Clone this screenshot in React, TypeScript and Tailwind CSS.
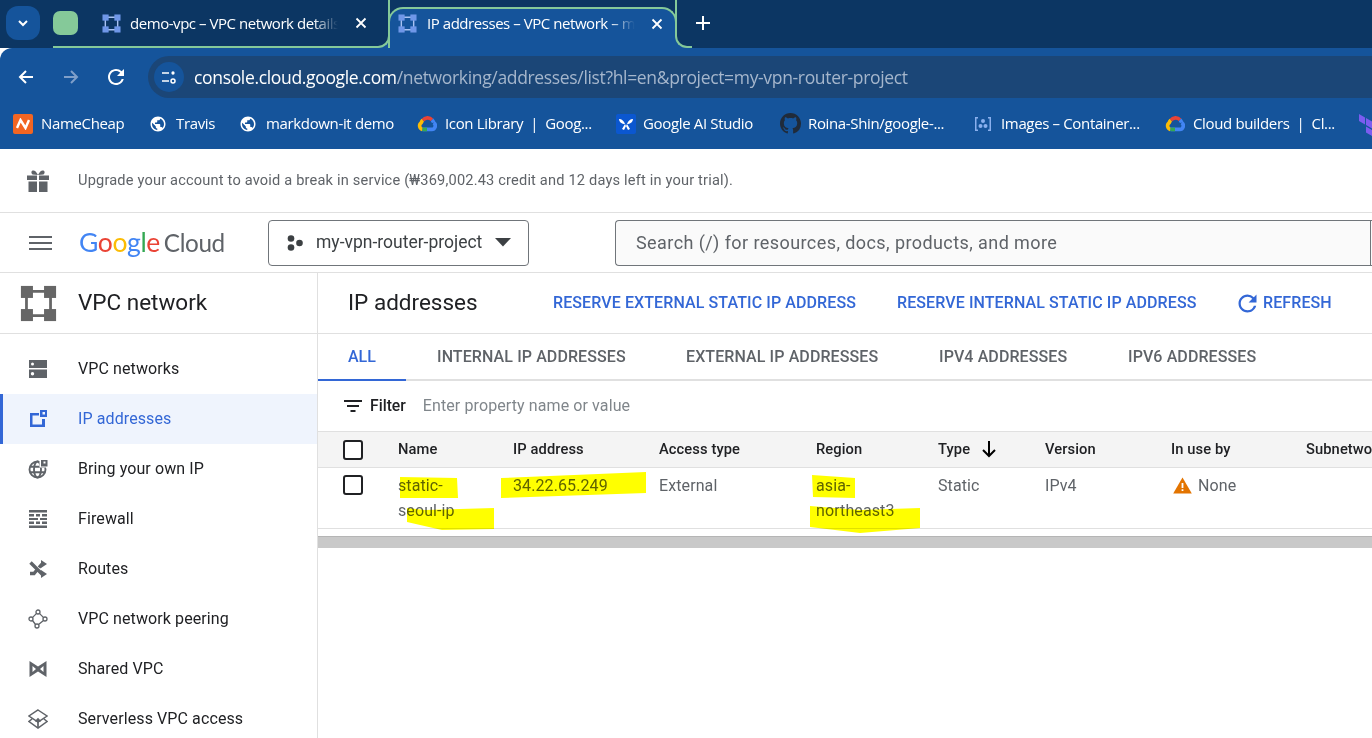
import type { ReactNode } from 'react'

function VpcIcon({ size = 20, fill = '#6f97e8', line = '#a9c2f2' }: { size?: number; fill?: string; line?: string }) {
  return (
    <svg width={size} height={size} viewBox="0 0 20 20" className="shrink-0">
      <path d="M3.500 6V14M6 3.500H14M16.500 6V14M6 16.500H14" stroke={line} strokeWidth="1.500" />
      <rect x="0.500" y="0.500" width="6.500" height="6.500" fill={fill} />
      <rect x="13" y="0.500" width="6.500" height="6.500" fill={fill} />
      <rect x="0.500" y="13" width="6.500" height="6.500" fill={fill} />
      <rect x="13" y="13" width="6.500" height="6.500" fill={fill} />
    </svg>
  )
}

function GlobeFav() {
  return (
    <svg width="18" height="18" viewBox="0 0 24 24" fill="#fff">
      <path d="M12 2C6.48 2 2 6.48 2 12s4.48 10 10 10 10-4.48 10-10S17.52 2 12 2zm-1 17.93c-3.95-.49-7-3.85-7-7.93 0-.62.08-1.21.21-1.79L9 15v1c0 1.1.9 2 2 2v1.93zm6.9-2.54c-.26-.81-1-1.39-1.9-1.39h-1v-3c0-.55-.45-1-1-1H8v-2h2c.55 0 1-.45 1-1V7h2c1.1 0 2-.9 2-2v-.41c2.93 1.19 5 4.06 5 7.41 0 2.08-.8 3.97-2.1 5.39z" />
    </svg>
  )
}

function CloudFav() {
  return (
    <svg width="20" height="18" viewBox="0 0 24 20" fill="none" strokeWidth="4.400">
      <path d="M7 5.500A7 7 0 0 1 18 5" stroke="#ea4335" />
      <path d="M18 5a7 7 0 0 1 2 3.400" stroke="#4285f4" />
      <path d="M6.500 16.500H17a4.400 4.400 0 0 0 3-8" stroke="#4285f4" />
      <path d="M7 5.500A7 7 0 0 0 5 8.500a4.500 4.500 0 0 0 1.500 8" stroke="#fbbc05" />
      <path d="M6.500 16.500H12" stroke="#34a853" />
    </svg>
  )
}

function CloseIcon() {
  return (
    <svg width="12" height="12" viewBox="0 0 12 12" stroke="#fff" strokeWidth="1.800" className="shrink-0">
      <path d="M1.500 1.500l9 9M10.500 1.500l-9 9" />
    </svg>
  )
}

function ReloadIcon({ size, fill, cls }: { size: number; fill: string; cls: string }) {
  return (
    <svg width={size} height={size} viewBox="0 0 24 24" fill={fill} className={cls}>
      <path d="M17.650 6.350A7.958 7.958 0 0 0 12 4c-4.420 0-7.990 3.580-7.990 8s3.570 8 7.990 8c3.730 0 6.840-2.550 7.730-6h-2.080A5.990 5.990 0 0 1 12 18c-3.310 0-6-2.690-6-6s2.690-6 6-6c1.660 0 3.140.69 4.220 1.780L13 11h7V4l-2.350 2.350z" />
    </svg>
  )
}

function Bookmark({ icon, label, w, gap = 'gap-[8px]' }: { icon: ReactNode; label: string; w: string; gap?: string }) {
  return (
    <div className={`flex items-center shrink-0 ${gap} ${w}`}>
      <span className="flex w-[20px] justify-center shrink-0">{icon}</span>
      <span className="text-[15px] text-white whitespace-pre">{label}</span>
    </div>
  )
}

function BrowserChrome() {
  return (
    <div className="font-['Open_Sans',sans-serif] tracking-[-0.35px]">
      {/* tab strip */}
      <div className="flex h-[48px] bg-[#0c3663] items-stretch">
        <div className="flex items-center justify-center w-[34px] h-[34px] ml-[6px] mt-[6px] rounded-[12px] bg-[#15549b]">
          <svg width="14" height="14" viewBox="0 0 14 14" fill="none" stroke="#fff" strokeWidth="2"><path d="M3 5l4 4 4-4" /></svg>
        </div>
        <div className="w-[337px] ml-[13px] bg-[#15549b]">
          <div className="flex items-start h-[48px] bg-[#0c3663] border-b-[2px] border-r-[2px] border-[#85c999] rounded-br-[12px]">
            <div className="w-[25px] h-[24px] mt-[11px] rounded-[7px] bg-[#85c999] shrink-0" />
            <div className="flex items-center h-[46px] ml-[24px]">
              <VpcIcon size={19} />
              <span className="ml-[9px] w-[208px] text-[15px] tracking-[-0.45px] text-white whitespace-nowrap overflow-hidden [mask-image:linear-gradient(to_right,#000_88%,transparent)]">
                demo-vpc – VPC network details
              </span>
              <span className="ml-[17px]"><CloseIcon /></span>
            </div>
          </div>
        </div>
        <div className="w-[289px] h-[41px] mt-[7px] -ml-[2px] flex items-center pl-[8px] pb-[10px] bg-[#15549b] border-[2px] border-b-0 border-[#85c999] rounded-t-[15px]">
          <VpcIcon size={19} />
          <span className="ml-[10px] w-[208px] text-[15px] tracking-[-0.45px] text-white whitespace-nowrap overflow-hidden [mask-image:linear-gradient(to_right,#000_88%,transparent)]">
            IP addresses – VPC network – my-vpn
          </span>
          <span className="ml-[16px]"><CloseIcon /></span>
        </div>
        <div className="w-[17px] -ml-[2px] bg-[#15549b]">
          <div className="h-[48px] bg-[#0c3663] border-b-[2px] border-l-[2px] border-[#85c999] rounded-bl-[12px]" />
        </div>
        <div className="flex items-center h-[46px] ml-[4px]">
          <svg width="14" height="14" viewBox="0 0 14 14" stroke="#fff" strokeWidth="2"><path d="M7 0v14M0 7h14" /></svg>
        </div>
      </div>
      {/* toolbar */}
      <div className="flex items-center h-[50px] pt-[8px] bg-[#15549b] rounded-tl-[12px]">
        <svg width="18" height="18" viewBox="0 0 18 18" fill="none" stroke="#fff" strokeWidth="2" className="ml-[17px]"><path d="M16 9H3M9 3L3 9l6 6" /></svg>
        <svg width="18" height="18" viewBox="0 0 18 18" fill="none" stroke="#7f9fc9" strokeWidth="2" className="ml-[27px]"><path d="M2 9h13M9 3l6 6-6 6" /></svg>
        <ReloadIcon size={24} fill="#fff" cls="ml-[24px]" />
        <div className="flex items-center ml-[20px] h-[42px] flex-1 rounded-l-[21px] bg-[#1b4677] pl-[6px]">
          <div className="flex items-center justify-center w-[30px] h-[30px] rounded-full bg-[#15549b]">
            <svg width="18" height="18" viewBox="0 0 18 18" fill="none" stroke="#fff" strokeWidth="1.500">
              <path d="M2 5h7M2 13h7" />
              <circle cx="13" cy="5" r="0.900" fill="#fff" />
              <circle cx="13" cy="13" r="2" />
            </svg>
          </div>
          <span className="ml-[10px] text-[17.550px] whitespace-nowrap text-white">
            console.cloud.google.com<span className="text-[#a5b6cc]">/networking/addresses/list?hl=en&amp;project=my-vpn-router-project</span>
          </span>
        </div>
      </div>
      {/* bookmarks */}
      <div className="flex items-center h-[51px] pl-[13px] bg-[#15549b] overflow-hidden">
        <Bookmark
          w="w-[135px]"
          label="NameCheap"
          icon={
            <span className="flex items-center justify-center w-[20px] h-[20px] rounded-[2px] bg-[#f26522]">
              <svg width="14" height="12" viewBox="0 0 14 12" fill="none" stroke="#fff" strokeWidth="2.400"><path d="M1 10l3.500-8 5 8 3.500-8" /></svg>
            </span>
          }
        />
        <Bookmark w="w-[90px]" label="Travis" icon={<GlobeFav />} />
        <Bookmark w="w-[179px]" label="markdown-it demo" icon={<GlobeFav />} />
        <Bookmark w="w-[199px]" label="Icon Library  |  Goog..." icon={<CloudFav />} />
        <Bookmark
          w="w-[164px]"
          gap="gap-[7px]"
          label="Google AI Studio"
          icon={
            <span className="flex items-center justify-center w-[20px] h-[20px] rounded-[2px] bg-[#0b57d0]">
              <svg width="16" height="16" viewBox="0 0 16 16" fill="#fff"><path d="M1 3c3 0 5 2 6 5-3 0-6-2-6-5zM15 3c-3 0-5 2-6 5 3 0 6-2 6-5zM7 8l3 6 2-1-3-5zM9 8l-3 6-2-1 3-5z" /></svg>
            </span>
          }
        />
        <Bookmark
          w="w-[193px]"
          label="Roina-Shin/google-..."
          icon={
            <svg width="21" height="21" viewBox="0 0 16 16" fill="#202b3a" className="shrink-0">
              <path d="M8 0C3.580 0 0 3.580 0 8c0 3.540 2.290 6.530 5.470 7.590.4.070.55-.17.55-.38 0-.19-.01-.82-.01-1.490-2.010.37-2.530-.49-2.690-.94-.09-.23-.48-.94-.82-1.130-.28-.15-.68-.52-.01-.53.63-.01 1.080.58 1.230.82.720 1.210 1.870.87 2.330.66.070-.52.280-.87.510-1.070-1.780-.2-3.640-.89-3.640-3.950 0-.87.310-1.590.820-2.150-.08-.2-.36-1.020.080-2.120 0 0 .67-.21 2.200.82.640-.18 1.320-.27 2-.27s1.360.09 2 .27c1.530-1.040 2.200-.82 2.200-.82.440 1.100.160 1.920.080 2.120.510.560.820 1.270.820 2.150 0 3.070-1.870 3.750-3.650 3.950.290.25.540.730.540 1.480 0 1.070-.01 1.930-.01 2.200 0 .21.150.46.550.38A8.013 8.013 0 0 0 16 8c0-4.420-3.580-8-8-8z" />
            </svg>
          }
        />
        <Bookmark
          w="w-[192px]"
          label="Images – Container..."
          icon={
            <svg width="20" height="20" viewBox="0 0 20 20" fill="#8ab0ee">
              <path d="M5 3H2v14h3v-1.500H3.500v-11H5zM15 3h3v14h-3v-1.500h1.500v-11H15z" />
              <circle cx="10" cy="7" r="2" />
              <circle cx="7.500" cy="12" r="2" />
              <circle cx="12.500" cy="12" r="2" />
            </svg>
          }
        />
        <Bookmark w="w-[194px]" label="Cloud builders  |  Cl..." icon={<CloudFav />} />
        <svg width="22" height="24" viewBox="0 0 22 24" fill="#7b5cf0" className="shrink-0">
          <path d="M0 2l6 3.500v7L0 9zM7 6l6 3.500v7L7 13zM14 9.500l6-3.500v7l-6 3.500zM7 14.500l6 3.500v6l-6-3.500z" />
        </svg>
      </div>
    </div>
  )
}

const iconCls = 'w-[20px] h-[20px] shrink-0'

const navItems: { label: string; icon: ReactNode }[] = [
  {
    label: 'VPC networks',
    icon: (
      <svg viewBox="0 0 20 20" className={iconCls} fill="#5f6368">
        <path fillRule="evenodd" d="M1 1h18v8H1zM4.500 3.500a1.500 1.500 0 1 0 0 3 1.500 1.500 0 0 0 0-3zM1 10.500h18V19H1zM4.500 13a1.700 1.700 0 1 0 0 3.400 1.700 1.700 0 0 0 0-3.400z" />
      </svg>
    ),
  },
  {
    label: 'IP addresses',
    icon: (
      <svg viewBox="0 0 20 20" className={iconCls} fill="#3367d6">
        <path fillRule="evenodd" d="M2 4h9v2.500H4.500v9H14V10h3v8H2z" />
        <path fillRule="evenodd" d="M12 1h7v7h-7zM14.500 3v2.500H17V3z" />
      </svg>
    ),
  },
  {
    label: 'Bring your own IP',
    icon: (
      <svg viewBox="0 0 20 20" className={iconCls}>
        <g fill="none" stroke="#5f6368" strokeWidth="1.900">
          <circle cx="9.500" cy="10.500" r="8" />
          <ellipse cx="9.500" cy="10.500" rx="3.500" ry="8" />
          <path d="M2 7.800h15M2 13.200h15" />
        </g>
        <rect x="11.500" y="0" width="8.500" height="8.500" fill="#fff" />
        <path fillRule="evenodd" d="M13 1h6.500v6.500H13zM15.500 2.500v2h2v-2z" fill="#5f6368" />
      </svg>
    ),
  },
  {
    label: 'Firewall',
    icon: (
      <svg viewBox="0 0 20 20" className={iconCls} fill="#5f6368">
        <path d="M1 1h18v2.500H1zM1 5h5v2.500H1zM8 5h4v2.500H8zM14 5h5v2.500h-5zM1 9h9v2H1zM12 9h7v2h-7zM1 12.500h5V15H1zM8 12.500h4V15H8zM14 12.500h5V15h-5zM1 16.500h18V19H1z" />
      </svg>
    ),
  },
  {
    label: 'Routes',
    icon: (
      <svg viewBox="0 0 20 20" className={iconCls}>
        <path d="M2.500 3.500L14.500 15.500M2 14.500h4l2.500-3M11 8.500l3-3.500" fill="none" stroke="#5f6368" strokeWidth="3.400" />
        <path d="M13 1l6 4-6 4zM13 11l6 4-6 4z" fill="#5f6368" />
      </svg>
    ),
  },
  {
    label: 'VPC network peering',
    icon: (
      <svg viewBox="0 0 20 20" className={iconCls} fill="none" stroke="#5f6368" strokeWidth="1.300">
        <circle cx="10" cy="3" r="2" />
        <circle cx="3" cy="10" r="2" />
        <circle cx="17" cy="10" r="2" />
        <circle cx="9" cy="17" r="2" />
        <path d="M8.600 4.400L4.400 8.600M11.400 4.400L15.600 8.600M4.500 11.500L7.500 15.500M15.500 11.500L10.500 15.600" />
      </svg>
    ),
  },
  {
    label: 'Shared VPC',
    icon: (
      <svg viewBox="0 0 20 20" className={iconCls} fill="#5f6368">
        <path fillRule="evenodd" d="M1.500 2L10 7.500 18.500 2v16L10 12.500 1.500 18zM4.500 7v6L8 10zM15.500 7L12 10l3.500 3z" />
      </svg>
    ),
  },
  {
    label: 'Serverless VPC access',
    icon: (
      <svg viewBox="0 0 20 20" className={iconCls} fill="none" stroke="#5f6368" strokeWidth="1.500">
        <path d="M10 1l9 6-9 6-9-6zM4 10l-3 2.500L10 19l9-6.500-3-2.500" />
        <path d="M10 18v-8M7.500 12.500L10 10l2.500 2.500" strokeWidth="1.700" />
      </svg>
    ),
  },
]

function Sidebar() {
  return (
    <div className="w-[318px] shrink-0 border-r border-[#e0e0e0] text-[#202124]">
      <div className="flex items-center h-[61px] pl-[20px] border-b border-[#e0e0e0]">
        <VpcIcon size={37} fill="#666" line="#666" />
        <span className="ml-[21px] text-[22.500px]">VPC network</span>
      </div>
      <div className="pt-[10px]">
        {navItems.map((item) => {
          const active = item.label === 'IP addresses'
          return (
            <div
              key={item.label}
              className={`flex items-center h-[50px] ${active ? 'bg-[#eff4fd] border-l-[3px] border-[#3367d6] pl-[25px]' : 'pl-[28px]'}`}
            >
              {item.icon}
              <span className={`ml-[30px] text-[16px] tracking-[0.1px] ${active ? 'text-[#3367d6]' : ''}`}>{item.label}</span>
            </div>
          )
        })}
      </div>
    </div>
  )
}

function Swipe({ d }: { d: string }) {
  return (
    <svg width="1372" height="738" viewBox="0 0 1372 738" className="absolute left-0 top-0 pointer-events-none mix-blend-multiply">
      <path d={d} fill="#ffff00" />
    </svg>
  )
}

function Checkbox() {
  return <div className="w-[20px] h-[20px] rounded-[3px] border-[2px] border-[#202124] bg-white" />
}

const columns = 'grid grid-cols-[80px_115px_146px_157px_122px_107px_126px_135px_200px] w-[1188px]'

function IpTable() {
  return (
    <div className="overflow-hidden">
      <div className={`${columns} h-[37px] items-center bg-[#f4f4f4] border-y border-[#e0e0e0] text-[14.700px] font-medium text-[#202124] tracking-[0.1px]`}>
        <div className="pl-[25px] pt-[1px]"><Checkbox /></div>
        <div>Name</div>
        <div>IP address</div>
        <div>Access type</div>
        <div>Region</div>
        <div className="flex items-center gap-[10px]">
          Type
          <svg width="18" height="18" viewBox="0 0 18 18" fill="none" stroke="#000" strokeWidth="2"><path d="M9 1v15M3 10l6 6 6-6" /></svg>
        </div>
        <div>Version</div>
        <div>In use by</div>
        <div className="whitespace-nowrap">Subnetwork</div>
      </div>
      <div className={`${columns} h-[61px] pt-[5px] border-b border-[#e0e0e0] text-[16px] leading-[25px] text-[#5f6368] tracking-[0.1px]`}>
        <div className="pl-[25px] pt-[2px]"><Checkbox /></div>
        <div>static-<br />seoul-ip</div>
        <div>34.22.65.249</div>
        <div>External</div>
        <div>asia-<br />northeast3</div>
        <div>Static</div>
        <div>IPv4</div>
        <div className="flex items-start gap-[6px]">
          <svg width="19" height="17" viewBox="0 0 19 17" className="mt-[4px] ml-[2px] shrink-0">
            <path d="M9.500 0.500L18.800 16.500H0.200z" fill="#e37400" />
            <path d="M8.600 6h1.800v5H8.600zM8.600 12.300h1.800v1.800H8.600z" fill="#fff" />
          </svg>
          None
        </div>
        <div />
      </div>
    </div>
  )
}

function Main() {
  return (
    <div className="flex-1 min-w-0 overflow-hidden">
      <div className="flex items-center h-[61px] pl-[30px] border-b border-[#e0e0e0] whitespace-nowrap">
        <span className="text-[22.500px] text-[#202124] w-[205px] shrink-0">IP addresses</span>
        <div className="flex items-center text-[16px] font-medium text-[#3367d6] tracking-[0.1px]">
          <span className="w-[344px]">RESERVE EXTERNAL STATIC IP ADDRESS</span>
          <span className="w-[342px]">RESERVE INTERNAL STATIC IP ADDRESS</span>
          <ReloadIcon size={27} fill="#3367d6" cls="-ml-[5px] mr-[2px]" />
          <span>REFRESH</span>
        </div>
      </div>
      <div className="flex h-[47px] border-b-[2px] border-[#e0e0e0] text-[16px] font-medium text-[#5f6368] tracking-[0.1px] whitespace-nowrap">
        <div className="flex items-center justify-center w-[88px] h-[47px] text-[#3367d6] border-b-[2px] border-[#3367d6]">ALL</div>
        <div className="flex items-center ml-[31px] w-[249px]">INTERNAL IP ADDRESSES</div>
        <div className="flex items-center w-[253px]">EXTERNAL IP ADDRESSES</div>
        <div className="flex items-center w-[189px]">IPV4 ADDRESSES</div>
        <div className="flex items-center">IPV6 ADDRESSES</div>
      </div>
      <div className="flex items-center h-[50px] pl-[26px]">
        <svg width="18" height="12" viewBox="0 0 18 12" fill="#202124"><path d="M0 0h18v2H0zM3 5h12v2H3zM6.500 10h5v2h-5z" /></svg>
        <span className="ml-[8px] text-[15.700px] font-medium text-[#202124]">Filter</span>
        <span className="ml-[17px] text-[16px] text-[#80868b] tracking-[0.1px]">Enter property name or value</span>
      </div>
      <IpTable />
      <div className="h-[12px] mt-[7px] bg-[#c9c9c9] border-t border-[#b5b5b5]" />
    </div>
  )
}

export default function App() {
  return (
    <div className="relative h-[738px] w-[1372px] overflow-hidden bg-white font-['Roboto',sans-serif]">
      <BrowserChrome />
      {/* trial banner */}
      <div className="flex items-center h-[64px] pl-[26px] border-b border-[#e0e0e0]">
        <svg width="24" height="24" viewBox="0 0 24 24" fill="#5f6368">
          <path d="M1 6.500h10V11H1zM13 6.500h10V11H13zM2.500 12.500H11V23H2.500zM13 12.500h8.500V23H13z" />
          <path d="M12 6C10 2 8.500 1 6.500 1.500 5 2 5 4.500 6.500 5.500zM12 6c2-4 3.500-5 5.500-4.500 1.500.5 1.500 3 0 4z" />
        </svg>
        <span className="ml-[28px] text-[14.600px] text-[#5f6368] tracking-[0.18px]">
          Upgrade your account to avoid a break in service (₩369,002.43 credit and 12 days left in your trial).
        </span>
      </div>
      {/* console header */}
      <div className="flex items-center h-[60px] border-b border-[#e0e0e0] whitespace-nowrap">
        <svg width="24" height="18" viewBox="0 0 24 18" fill="#5f6368" className="ml-[29px]"><path d="M0 2h23v2H0zM0 8h23v2H0zM0 14h23v2H0z" /></svg>
        <div className="ml-[27px] w-[188px] text-[24.300px] font-['Lato',sans-serif] tracking-[-0.4px] -indent-[1px]">
          <span className="text-[26.500px]">
            <span className="text-[#4285f4]">G</span>
            <span className="text-[#ea4335]">o</span>
            <span className="text-[#fbbc05]">o</span>
            <span className="text-[#4285f4]">g</span>
            <span className="text-[#34a853]">l</span>
            <span className="text-[#ea4335]">e</span>
          </span>
          <span className="ml-[4px] text-[#5f6368]">Cloud</span>
        </div>
        <div className="flex items-center w-[261px] h-[46px] rounded-[4px] border border-[#70757a] pl-[17px]">
          <svg width="18" height="18" viewBox="0 0 18 18" fill="#3c4043">
            <circle cx="5" cy="4.500" r="3.300" />
            <circle cx="5" cy="13.500" r="3.300" />
            <circle cx="13.500" cy="9" r="3.300" />
          </svg>
          <span className="ml-[12px] text-[17.500px] text-[#3c4043]">my-vpn-router-project</span>
          <svg width="16" height="9" viewBox="0 0 16 9" fill="#3c4043" className="ml-[13px]"><path d="M0 0h16L8 8.500z" /></svg>
        </div>
        <div className="flex items-center ml-[86px] flex-1 h-[46px] rounded-l-[4px] border border-r-0 border-[#70757a] bg-[#fafafa] pl-[20px] relative">
          <span className="text-[18px] text-[#5f6368] tracking-[0.42px]">Search (/) for resources, docs, products, and more</span>
          <div className="absolute right-[1px] top-0 bottom-0 w-px bg-[#70757a]" />
        </div>
      </div>
      {/* console body */}
      <div className="flex h-[465px]">
        <Sidebar />
        <Main />
      </div>
      {/* yellow marker strokes over the table values */}
      <Swipe d="M400 477L457 478 458 498 400 498ZM407 508L425 510 494 508 494 529 442 530 407 522ZM501 478L646 472 646 493 501 498ZM812 475L855 478 855 498 813 497ZM810 506L860 510 920 508 920 528 860 533 810 527Z" />
    </div>
  )
}
